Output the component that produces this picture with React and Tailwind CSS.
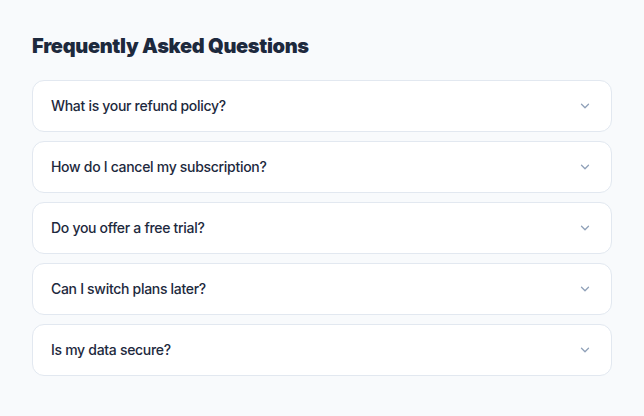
import React, { useState } from 'react';
import { ChevronDown } from 'lucide-react';

const faqs = [
  { q: 'What is your refund policy?', a: 'We offer a full refund within 30 days of purchase, no questions asked.' },
  { q: 'How do I cancel my subscription?', a: 'You can cancel at any time from the Billing section of your account settings.' },
  { q: 'Do you offer a free trial?', a: 'Yes, every plan comes with a 14-day free trial.' },
  { q: 'Can I switch plans later?', a: 'Absolutely. Upgrade or downgrade whenever you like.' },
  { q: 'Is my data secure?', a: 'All data is encrypted in transit and at rest.' },
];

function FaqItem({ item }) {
  const [open, setOpen] = useState(false);
  return (
    <div className="bg-white border border-slate-200 rounded-xl">
      <button
        onClick={() => setOpen(!open)}
        className="w-full flex items-center justify-between px-[18px] py-[15px] text-left"
      >
        <span className="text-sm leading-5 font-medium tracking-[-0.3px] text-slate-800">{item.q}</span>
        <ChevronDown
          size={14}
          strokeWidth={2.25}
          className={`text-slate-400 mr-[1px] transition-transform ${open ? 'rotate-180' : ''}`}
        />
      </button>
      {open && <div className="px-[18px] pb-4 text-sm text-slate-600">{item.a}</div>}
    </div>
  );
}

export default function App() {
  return (
    <div className="min-h-screen bg-slate-50 px-8 py-8 font-['Inter',sans-serif]">
      <h1 className="text-xl leading-7 font-black tracking-[-0.33px] text-slate-800 mb-5">
        Frequently Asked Questions
      </h1>
      <div className="flex flex-col gap-[9px]">
        {faqs.map((f, i) => (
          <FaqItem key={i} item={f} />
        ))}
      </div>
    </div>
  );
}
